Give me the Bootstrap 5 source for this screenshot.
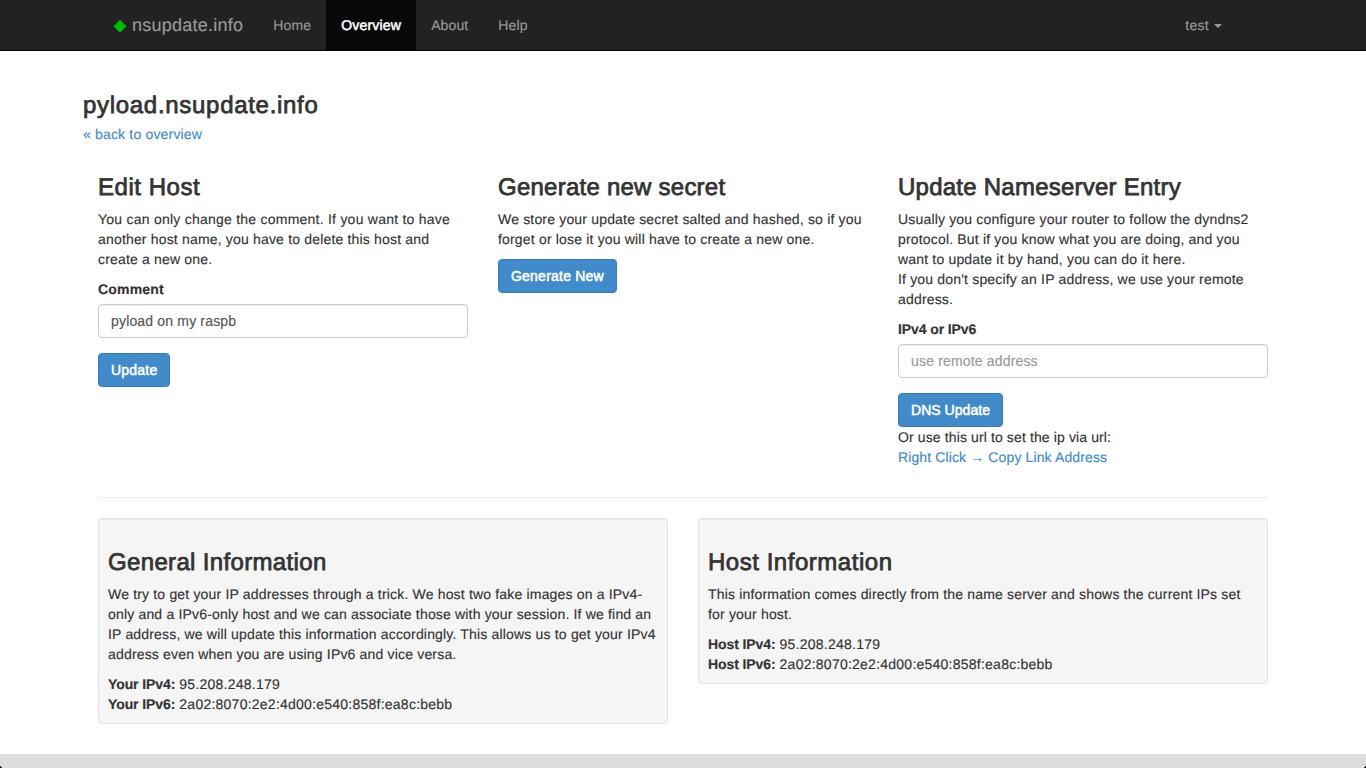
<!DOCTYPE html>
<html lang="en">
<head>
<meta charset="utf-8">
<meta name="viewport" content="width=device-width, initial-scale=1">
<title>pyload.nsupdate.info</title>
<link href="https://cdn.jsdelivr.net/npm/bootstrap@5.3.0/dist/css/bootstrap.min.css" rel="stylesheet">
<style>
  :root { --blue: #428bca; }
  body {
    font: 14px/20px "Liberation Sans", Arial, sans-serif;
    color: #333; letter-spacing: .175px; text-rendering: geometricPrecision;
    -webkit-text-stroke: .15px currentColor;
    height: 768px; overflow: hidden;
  }
  a { color: var(--blue); text-decoration: none; }
  p { margin-bottom: 10px; }
  h2 {
    font-size: 24px; line-height: 30px; font-weight: 400; margin-bottom: 6px;
    letter-spacing: .24px; -webkit-text-stroke: .75px currentColor;
  }
  strong, .form-label { letter-spacing: -.1px; font-weight: 700; }
  .ls-comment { letter-spacing: .18px; }
  .ls-general { letter-spacing: .34px; }
  .ls-wide { letter-spacing: .53px; }
  .ls-title { letter-spacing: .7px; margin-bottom: 3px; }
  .ls-address { letter-spacing: .24px; }
  .ls-hint { letter-spacing: .12px; }

  /* top bar */
  .topbar { background: #222; border-bottom: 1px solid #080808; height: 51px; }
  .topbar-inner { width: 1170px; padding: 0 15px; }
  .topbar .navbar-brand { font-size: 18px; line-height: 20px; color: #999; letter-spacing: .25px; padding: 15px 0; margin-right: 15px; }
  .topbar .navbar-nav .nav-link { color: #999; padding: 15px; letter-spacing: .12px; }
  .topbar .navbar-nav .nav-link.active { color: #fff; background: #080808; -webkit-text-stroke: .5px #fff; letter-spacing: .2px; }
  .topbar .navbar-nav .user-link { letter-spacing: .3px; }
  .topbar .dropdown-toggle::after { border-width: 4px 4px 0; margin-left: 5px; vertical-align: 2px; }
  .diamond { width: 14px; height: 14px; margin: 2px 5px 0 0; }

  /* content */
  .page { width: 1200px; padding-top: 40px; }
  .row { --bs-gutter-x: 30px; }
  .tools { margin-top: 29px; }
  .form-label { margin-bottom: 5px; line-height: 20px; }
  .form-control {
    height: 34px; padding: 6px 12px; font-size: 14px; line-height: 20px; color: #555;
    letter-spacing: .17px; border-color: #ccc; border-radius: 4px;
    box-shadow: inset 0 1px 1px rgba(0,0,0,.075); margin-bottom: 15px;
  }
  .form-control::placeholder { color: #999; }
  .btn-primary {
    --bs-btn-bg: #428bca; --bs-btn-border-color: #357ebd;
    font-size: 14px; line-height: 20px; padding: 6px 12px; border-radius: 4px; height: 34px;
    letter-spacing: .22px; -webkit-text-stroke: .5px #fff;
  }
  .btn-tight { letter-spacing: .04px; }
  .divider { height: 1px; background: #eee; margin: 30px 15px 20px; }
  .well {
    background: #f5f5f5; border: 1px solid #e3e3e3; border-radius: 3px;
    padding: 29px 9px 9px; box-shadow: inset 0 1px 1px rgba(0,0,0,.05);
  }

  /* bottom strip */
  .bottom-strip { background: #ddd; height: 14px; }
  .corner { width: 2px; height: 2px; background: #1c1e26; clip-path: polygon(0 0, 50% 0, 50% 50%, 100% 50%, 100% 100%, 0 100%); }
  .corner-end { transform: scaleX(-1); }
</style>
<script src="https://cdn.jsdelivr.net/npm/bootstrap@5.3.0/dist/js/bootstrap.bundle.min.js"></script>
</head>
<body class="d-flex flex-column bg-white">

<nav class="topbar navbar navbar-expand p-0 flex-shrink-0 align-items-start">
  <div class="topbar-inner d-flex mx-auto">
    <a class="navbar-brand d-flex align-items-center" href="#">
      <svg class="diamond" viewBox="0 0 14 14" aria-hidden="true"><path d="M7 .8 13.5 7.3 7 13.8 .5 7.3z" fill="#0b0"/></svg>nsupdate.info
    </a>
    <div class="navbar-nav me-auto">
      <a class="nav-link" href="#">Home</a>
      <a class="nav-link active" href="#">Overview</a>
      <a class="nav-link" href="#">About</a>
      <a class="nav-link" href="#">Help</a>
    </div>
    <div class="navbar-nav me-3">
      <a class="nav-link user-link dropdown-toggle" href="#" data-bs-toggle="dropdown">test</a>
    </div>
  </div>
</nav>

<main class="page mx-auto flex-grow-1">
  <h2 class="ls-title">pyload.nsupdate.info</h2>
  <a class="d-block" href="#">« back to overview</a>

  <div class="row mx-0 tools">
    <section class="col-4">
      <h2 class="ls-wide">Edit Host</h2>
      <p><span class="ls-address">You can only change the comment. If you want to have</span> another host name, you have to delete this host and create a new one.</p>
      <label class="form-label d-block ls-comment" for="comment">Comment</label>
      <input class="form-control" id="comment" type="text" value="pyload on my raspb">
      <button class="btn btn-primary d-block" type="button">Update</button>
    </section>
    <section class="col-4">
      <h2>Generate new secret</h2>
      <p>We store your update secret salted and hashed, so if you forget or lose it you will have to create a new one.</p>
      <button class="btn btn-primary d-block" type="button">Generate New</button>
    </section>
    <section class="col-4">
      <h2>Update Nameserver Entry</h2>
      <p>Usually you configure your router to follow the dyndns2 protocol. But if you know what you are doing, and you want to update it by hand, you can do it here.<br>If you don't specify an IP address, we use your remote address.</p>
      <label class="form-label d-block" for="ip">IPv4 or IPv6</label>
      <input class="form-control" id="ip" type="text" placeholder="use remote address">
      <button class="btn btn-primary btn-tight d-block" type="button">DNS Update</button>
      <div class="ls-hint">Or use this url to set the ip via url:</div>
      <a class="d-block ls-hint" href="#">Right Click → Copy Link Address</a>
    </section>
  </div>

  <div class="divider"></div>

  <div class="row mx-0 align-items-start">
    <section class="col-6">
      <div class="well">
        <h2 class="ls-general">General Information</h2>
        <p>We try to get your IP addresses through a trick. We host two fake images on a IPv4-only and a IPv6-only host and we can associate those with your session. If we find an IP address, we will update this information accordingly. This allows us to get your IPv4 address even when you are using IPv6 and vice versa.</p>
        <div class="ls-address"><strong>Your IPv4:</strong> 95.208.248.179</div>
        <div class="ls-address"><strong>Your IPv6:</strong> 2a02:8070:2e2:4d00:e540:858f:ea8c:bebb</div>
      </div>
    </section>
    <section class="col-6">
      <div class="well">
        <h2 class="ls-wide">Host Information</h2>
        <p>This information comes directly from the name server and shows the current IPs set for your host.</p>
        <div class="ls-address"><strong>Host IPv4:</strong> 95.208.248.179</div>
        <div class="ls-address"><strong>Host IPv6:</strong> 2a02:8070:2e2:4d00:e540:858f:ea8c:bebb</div>
      </div>
    </section>
  </div>
</main>

<footer class="bottom-strip d-flex justify-content-between align-items-end flex-shrink-0">
  <span class="corner"></span><span class="corner corner-end"></span>
</footer>
</body>
</html>
